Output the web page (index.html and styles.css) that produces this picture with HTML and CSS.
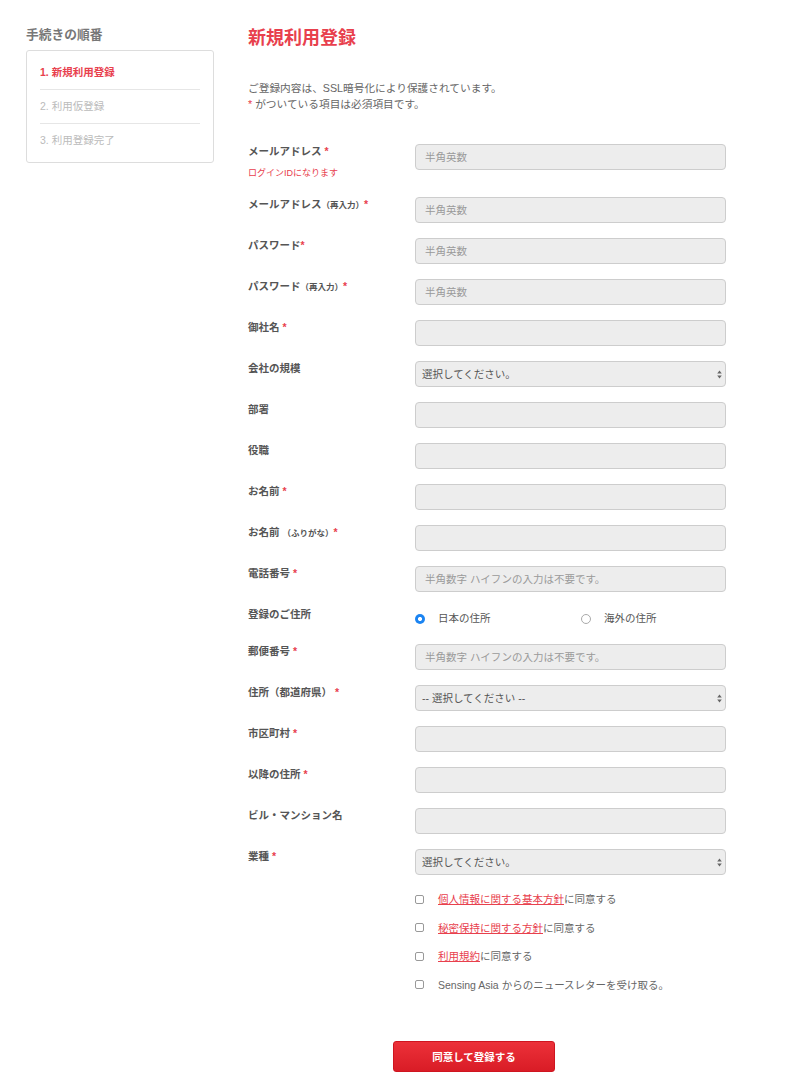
FILE: index.html
```html
<!DOCTYPE html>
<html lang="ja">
<head>
	<meta charset="UTF-8">
	<title>新規利用登録</title>
	<link rel="stylesheet" href="styles.css">
</head>
<body>
	<div id="page">
		<div id="side">
			<h2 class="side-title">手続きの順番</h2>
			<ul class="steps">
				<li class="current">1. 新規利用登録</li>
				<li>2. 利用仮登録</li>
				<li>3. 利用登録完了</li>
			</ul>
		</div>
		<div id="main">
			<h1 class="title">新規利用登録</h1>
			<p class="intro">ご登録内容は、SSL暗号化により保護されています。<br><span class="req">*</span> がついている項目は必須項目です。</p>

			<form class="form">
				<div class="row tall">
					<div class="label">メールアドレス <span class="req">*</span><p class="note">ログインIDになります</p></div>
					<input class="input" type="text" placeholder="半角英数">
				</div>
				<div class="row">
					<div class="label">メールアドレス<small>（再入力）</small><span class="req">*</span></div>
					<input class="input" type="text" placeholder="半角英数">
				</div>
				<div class="row">
					<div class="label">パスワード<span class="req">*</span></div>
					<input class="input" type="password" placeholder="半角英数">
				</div>
				<div class="row">
					<div class="label">パスワード<small>（再入力）</small><span class="req">*</span></div>
					<input class="input" type="password" placeholder="半角英数">
				</div>
				<div class="row">
					<div class="label">御社名 <span class="req">*</span></div>
					<input class="input" type="text">
				</div>
				<div class="row">
					<div class="label">会社の規模</div>
					<div class="select">
						<select><option>選択してください。</option></select>
						<svg width="5" height="9" viewBox="0 0 5 9"><path d="M2.5 0.5 L4.8 3.6 H0.2 Z M2.5 8.5 L4.8 5.4 H0.2 Z" fill="#666"/></svg>
					</div>
				</div>
				<div class="row">
					<div class="label">部署</div>
					<input class="input" type="text">
				</div>
				<div class="row">
					<div class="label">役職</div>
					<input class="input" type="text">
				</div>
				<div class="row">
					<div class="label">お名前 <span class="req">*</span></div>
					<input class="input" type="text">
				</div>
				<div class="row">
					<div class="label">お名前 <small>（ふりがな）</small><span class="req">*</span></div>
					<input class="input" type="text">
				</div>
				<div class="row">
					<div class="label">電話番号 <span class="req">*</span></div>
					<input class="input" type="text" placeholder="半角数字 ハイフンの入力は不要です。">
				</div>
				<div class="row radio-row">
					<div class="label">登録のご住所</div>
					<div class="radios">
						<label class="radio"><span class="dot on"></span>日本の住所</label>
						<label class="radio"><span class="dot"></span>海外の住所</label>
					</div>
				</div>
				<div class="row">
					<div class="label">郵便番号 <span class="req">*</span></div>
					<input class="input" type="text" placeholder="半角数字 ハイフンの入力は不要です。">
				</div>
				<div class="row">
					<div class="label">住所（都道府県） <span class="req">*</span></div>
					<div class="select">
						<select><option>-- 選択してください --</option></select>
						<svg width="5" height="9" viewBox="0 0 5 9"><path d="M2.5 0.5 L4.8 3.6 H0.2 Z M2.5 8.5 L4.8 5.4 H0.2 Z" fill="#666"/></svg>
					</div>
				</div>
				<div class="row">
					<div class="label">市区町村 <span class="req">*</span></div>
					<input class="input" type="text">
				</div>
				<div class="row">
					<div class="label">以降の住所 <span class="req">*</span></div>
					<input class="input" type="text">
				</div>
				<div class="row">
					<div class="label">ビル・マンション名</div>
					<input class="input" type="text">
				</div>
				<div class="row">
					<div class="label">業種 <span class="req">*</span></div>
					<div class="select">
						<select><option>選択してください。</option></select>
						<svg width="5" height="9" viewBox="0 0 5 9"><path d="M2.5 0.5 L4.8 3.6 H0.2 Z M2.5 8.5 L4.8 5.4 H0.2 Z" fill="#666"/></svg>
					</div>
				</div>

				<ul class="agree">
					<li><span class="box"></span><a href="#">個人情報に関する基本方針</a>に同意する</li>
					<li><span class="box"></span><a href="#">秘密保持に関する方針</a>に同意する</li>
					<li><span class="box"></span><a href="#">利用規約</a>に同意する</li>
					<li><span class="box"></span>Sensing Asia からのニュースレターを受け取る。</li>
				</ul>

				<button class="submit" type="button">同意して登録する</button>
			</form>
		</div>
	</div>
</body>
</html>
```

FILE: styles.css
```css
* {margin: 0; padding: 0; box-sizing: border-box;}
body {font-family: "Liberation Sans", "Noto Sans CJK JP", sans-serif; font-size: 10.5px; color: #666; background: #fff;}
ul {list-style: none;}

#page {display: flex; gap: 34px; padding: 26px 0 40px 26px;}

#side {width: 188px; flex: none;}
.side-title {font-size: 12.75px; line-height: 18px; color: #777; font-weight: bold; margin-bottom: 6px;}
.steps {border: 1px solid #ddd; border-radius: 3px; padding: 5px 13px 5px 13px;}
.steps li {line-height: 15px; padding: 9px 0; border-bottom: 1px solid #e6e6e6; color: #bbb;}
.steps li:last-child {border-bottom: none;}
.steps li.current {color: #e8404d; font-weight: bold;}

#main {width: 478px;}
.title {font-size: 18px; line-height: 24px; color: #e8404d; font-weight: bold;}
.intro {margin-top: 30px; line-height: 16px; color: #666; font-size: 10.7px;}
.req {color: #e8404d;}

.form {margin-top: 32px;}
.row {display: grid; grid-template-columns: 167px 311px; margin-bottom: 15px; align-items: start;}
.row.tall {margin-bottom: 18px;}
.label {line-height: 15px; color: #555; font-weight: bold;}
.label small {font-size: 8.5px;}
.note {font-size: 9px; line-height: 12px; color: #e8404d; font-weight: normal; margin-top: 8px;}

.input, .select select {width: 311px; height: 26px; border: 1px solid #cdcdcd; border-radius: 4px; background: #ededed; font-family: inherit; font-size: 10.5px; color: #555; padding: 0 9px; outline: none;}
.input::placeholder {color: #9a9a9a;}
.select {position: relative;}
.select select {appearance: none; -webkit-appearance: none; padding: 0 6px; color: #555;}
.select svg {position: absolute; right: 4px; top: 9px; pointer-events: none;}

.radios {display: flex; height: 22px; padding-top: 1px;}
.radio {display: flex; align-items: center; gap: 13px; line-height: 15px; color: #555; flex: none; width: 166px; cursor: pointer;}
.dot {width: 10px; height: 10px; border-radius: 50%; border: 1px solid #aaa; background: #fff;}
.dot.on {border: none; background: radial-gradient(circle, #fff 0 1.8px, #1b84f2 2.3px);}

.agree {margin-left: 167px; margin-top: 15px;}
.agree li {display: flex; align-items: center; height: 18px; line-height: 18px; margin-bottom: 10.5px; color: #666;}
.agree a {color: #e8404d; text-decoration: underline;}
.box {width: 9px; height: 9px; border: 1px solid #999; border-radius: 2px; margin: 0 14px 0 0; flex: none;}

.submit {display: block; margin: 47px 0 0 145px; width: 162px; height: 31px; border: 1px solid #cf1520; border-radius: 3px; background: linear-gradient(#ec3139, #d91c26); color: #fff; font-family: inherit; font-size: 10.5px; font-weight: bold; cursor: pointer;}
```
